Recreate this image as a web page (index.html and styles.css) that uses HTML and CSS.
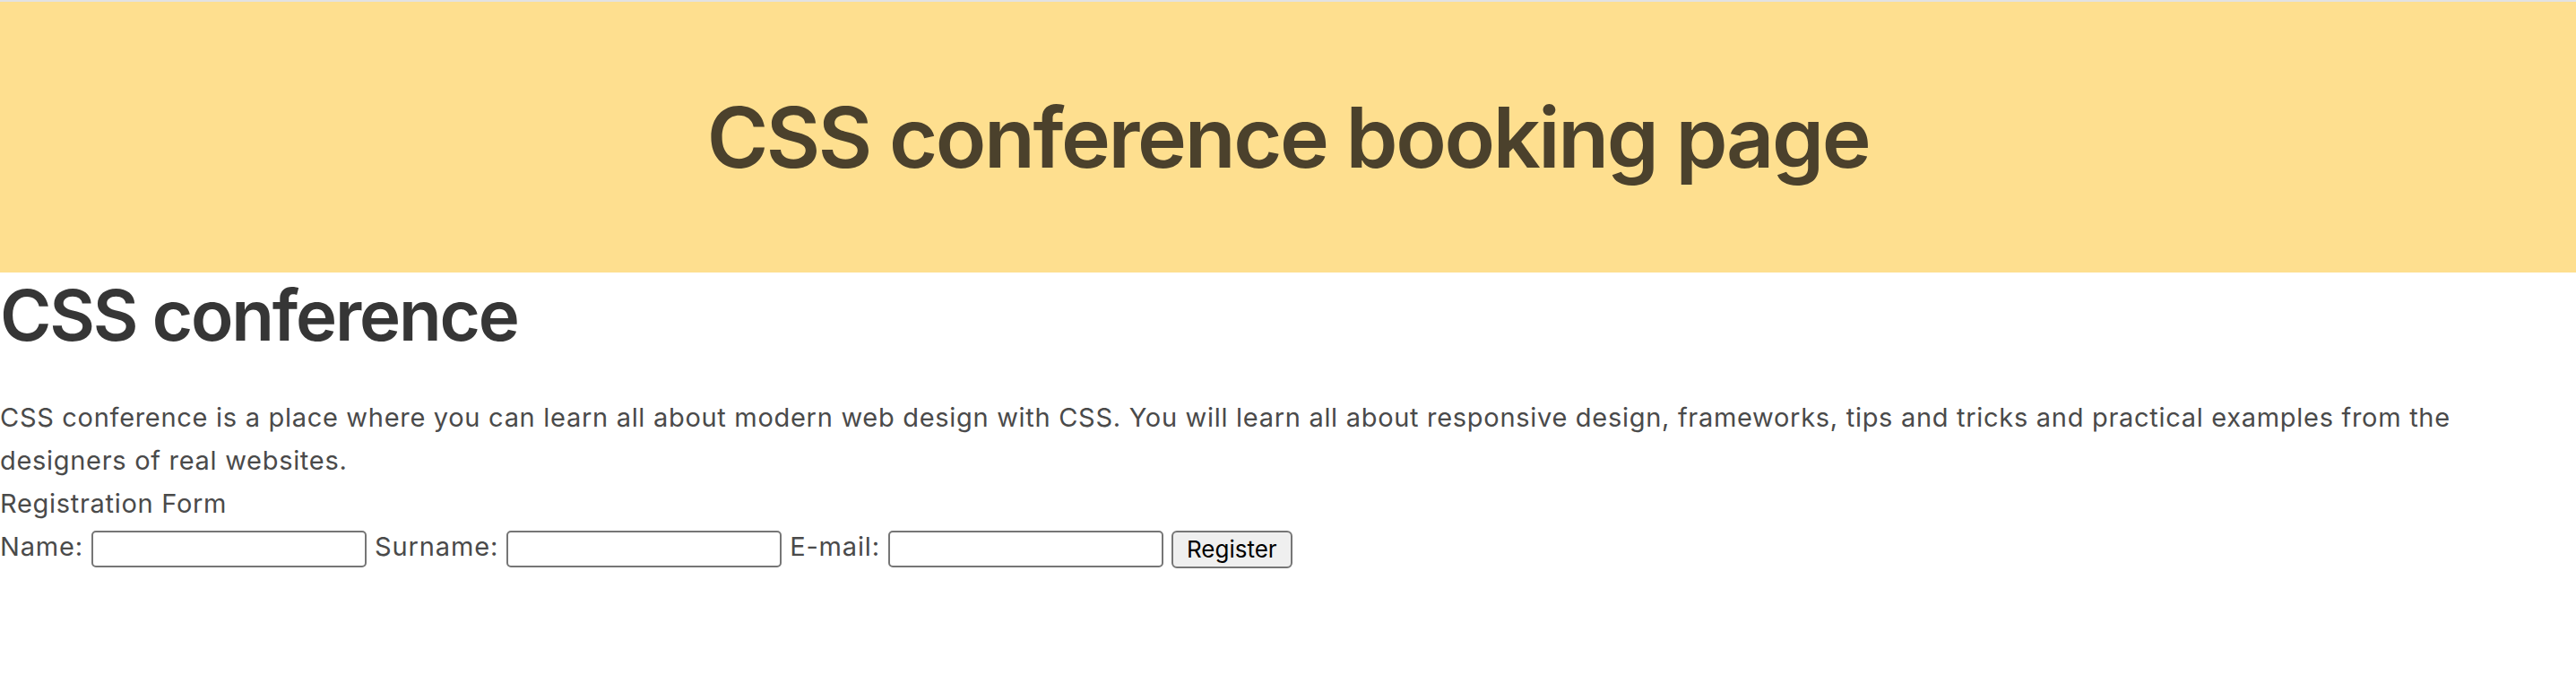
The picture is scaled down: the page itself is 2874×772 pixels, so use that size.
FILE: index.html
```html
<!DOCTYPE html>
<html lang="en">
<head>
<meta charset="utf-8">
<title>CSS conference booking page</title>
<link rel="stylesheet" href="styles.css">
</head>
<body>
<header class="site-header">
  <h1 class="site-title">CSS conference booking page</h1>
</header>
<main class="content">
  <h2 class="section-title">CSS conference</h2>
  <p class="intro">CSS conference is a place where you can learn all about modern web design with CSS. You will learn all about responsive design, frameworks, tips and tricks and practical examples from the designers of real websites.</p>
  <div class="form-title">Registration Form</div>
  <form class="reg-form">
    <label class="field-label" for="name">Name:</label> <input class="field" type="text" id="name"> <label class="field-label" for="surname">Surname:</label> <input class="field" type="text" id="surname"> <label class="field-label" for="email">E-mail:</label> <input class="field" type="email" id="email"> <button class="btn" type="button">Register</button>
  </form>
</main>
</body>
</html>
```

FILE: styles.css
```css
html, body {
  margin: 0;
  padding: 0;
  background: #ffffff;
}

body {
  font-family: Inter, "Noto Sans", sans-serif;
  color: #4a4a4a;
  border-top: 2px solid #e2e2e2;
}

.site-header {
  background: #fedf8f;
  height: 302px;
  display: flex;
  align-items: center;
  justify-content: center;
}

.site-title {
  margin: 0;
  font-size: 93px;
  font-weight: 600;
  line-height: 116px;
  color: #4b412c;
  letter-spacing: -2.4px;
}

.section-title {
  margin: 0 0 43px;
  font-size: 78px;
  font-weight: 600;
  line-height: 95px;
  color: #363636;
  letter-spacing: -2.2px;
}

.intro,
.form-title,
.reg-form {
  margin: 0;
  font-size: 29px;
  line-height: 48px;
  letter-spacing: 0.7px;
}

.reg-form {
  letter-spacing: 0.85px;
}

.field {
  box-sizing: border-box;
  width: 307px;
  height: 41px;
  border: 2px solid #767676;
  border-radius: 5px;
  padding: 0 4px;
  font-family: Inter, sans-serif;
  font-size: 26px;
  vertical-align: -2px;
  background: #fff;
}

.btn {
  box-sizing: border-box;
  height: 42px;
  padding: 0 15px;
  border: 2px solid #767676;
  border-radius: 6px;
  background: #efefef;
  color: #000;
  font-family: Inter, sans-serif;
  font-size: 26px;
  line-height: 38px;
  letter-spacing: 0;
  vertical-align: -2px;
}
```
